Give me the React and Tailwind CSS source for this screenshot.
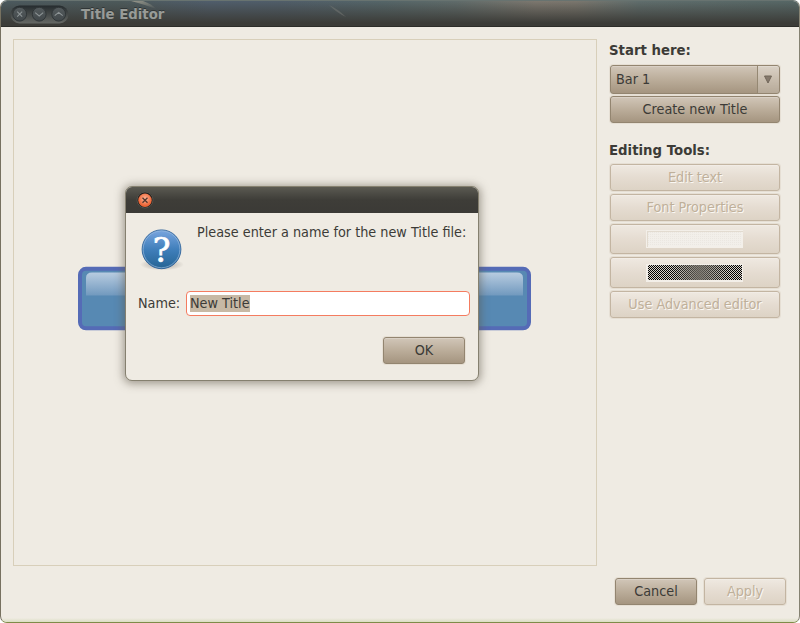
import React from "react";

const sans = "font-['DejaVu_Sans_Condensed','DejaVu_Sans',sans-serif] [font-stretch:semi-condensed]";

function Button({ children, disabled, className = "" }) {
  const look = disabled
    ? "border-[#c3b5a2] bg-gradient-to-b from-[#efe9e1] via-[#e5dcd1] to-[#ddd3c5] text-[#bfb09a] [text-shadow:1px_1px_0_#fbf8f4]"
    : "border-[#938570] bg-gradient-to-b from-[#d1c6b8] via-[#bbad9a] to-[#a59580] text-[#3c3b37]";
  return (
    <button
      className={`flex shrink-0 items-center justify-center rounded-[3px] border pb-px text-[14.28px] leading-[14px] whitespace-nowrap shadow-[0_0_0_1px_#e6dfd4,inset_0_1px_0_#ffffff33] ${look} ${className}`}
    >
      {children}
    </button>
  );
}

function TitleBar() {
  return (
    <header className="relative flex h-[26px] shrink-0 items-center border-b border-[#2d2d29] bg-[linear-gradient(to_bottom,transparent_0%,#3c3c38_88%),linear-gradient(to_right,#4c5a5f_0%,#4d5a5b_15%,#505e6c_26%,#505e6a_35%,#556669_48%,#606c6b_57%,#7d786f_67%,#7b776e_72%,#606e6d_80%,#566766_100%)] pt-px pl-[9px]">
      <svg className="absolute top-0 left-0" width="400" height="25" viewBox="0 0 400 25">
        <defs>
          <linearGradient id="streak" x1="0" y1="0" x2="1" y2="1">
            <stop stopColor="#a9a595" stopOpacity=".8" />
            <stop offset="1" stopColor="#a9a595" stopOpacity="0" />
          </linearGradient>
        </defs>
        <path d="M130 0h12q9 3 13 8-10-4-25-8Z" fill="url(#streak)" />
        <path d="M328 4q9 4 17 12-9-4-17-12Z" fill="#777a75" opacity=".5" />
      </svg>
      <svg className="relative" width="60" height="19" viewBox="0 0 60 19">
        <defs>
          <linearGradient id="pill" x1="0" y1="0" x2="0" y2="1">
            <stop stopColor="#252b2e" />
            <stop offset="1" stopColor="#666965" />
          </linearGradient>
          <linearGradient id="control" x1="0" y1="0" x2="0" y2="1">
            <stop stopColor="#555c5e" />
            <stop offset="1" stopColor="#41474a" />
          </linearGradient>
        </defs>
        <rect x="0.5" y="0.5" width="58" height="18" rx="9" fill="url(#pill)" />
        {[9.7, 29.2, 48.7].map((x) => (
          <circle key={x} cx={x} cy="9.2" r="6.9" fill="url(#control)" stroke="#303638" />
        ))}
        <g fill="none" stroke="#8d9495" strokeWidth="1.1">
          <path d="M7.2 6.7 12.2 11.7M12.2 6.7 7.2 11.7" />
          <path d="m25.2 7.7 4 3.3 4-3.3M44.7 10.7l4-3.3 4 3.3" />
        </g>
      </svg>
      <h1 className="relative ml-[11px] pt-[2px] font-['DejaVu_Sans',sans-serif] text-[13.3px] leading-none font-bold text-[#989b97] [font-stretch:normal] [text-shadow:0_-1px_0_#303637]">
        Title Editor
      </h1>
    </header>
  );
}

function BarPreview() {
  return (
    <svg className="absolute top-[226px] left-[64px]" width="454" height="65" viewBox="0 0 454 65">
      <defs>
        <linearGradient id="gloss" x1="0" y1="0" x2="0" y2="1">
          <stop stopColor="#b8cce0" />
          <stop offset="1" stopColor="#7199be" />
        </linearGradient>
      </defs>
      <rect x="2" y="2.8" width="449" height="59.5" rx="6" fill="#5789b3" stroke="#556bb6" strokeWidth="4" />
      <path d="M8 29.5V12Q8 6.5 14 6.5H439Q445 6.5 445 12V29.5Z" fill="url(#gloss)" />
    </svg>
  );
}

function NameDialog() {
  return (
    <section className="absolute top-[185px] left-[124px] flex h-[195px] w-[354px] flex-col overflow-hidden rounded-[7px] border border-[#85806f] bg-[#efebe3] shadow-[0_1px_9px_2px_#5f594b88]">
      <div className="flex h-[26px] shrink-0 items-center bg-gradient-to-b from-[#5b5a52] via-[#3e3d38] to-[#3b3a36] pl-[10px]">
        <svg width="18" height="18" viewBox="0 0 18 18">
          <defs>
            <radialGradient id="close" cx="50%" cy="40%">
              <stop stopColor="#ffb79a" />
              <stop offset="1" stopColor="#ed6637" />
            </radialGradient>
          </defs>
          <circle cx="9" cy="9" r="8" fill="#20201e" stroke="#5c5b54" strokeWidth=".8" />
          <circle cx="9" cy="9.2" r="6.7" fill="url(#close)" />
          <path d="m6.5 6.8 5 5m0-5-5 5" stroke="#53382e" strokeWidth="1.3" />
        </svg>
      </div>
      <div className="flex h-[78px] pt-[12px] pl-[12px]">
        <svg className="mt-[1px] shrink-0" width="48" height="48" viewBox="0 0 48 48">
          <defs>
            <linearGradient id="orb" x1="0" y1="0" x2="0" y2="1">
              <stop stopColor="#7aa6df" />
              <stop offset=".5" stopColor="#407fbb" />
              <stop offset="1" stopColor="#256494" />
            </linearGradient>
            <radialGradient id="shade">
              <stop stopColor="#77716a" stopOpacity=".65" />
              <stop offset="1" stopColor="#77716a" stopOpacity="0" />
            </radialGradient>
          </defs>
          <ellipse cx="24" cy="38.5" rx="22" ry="6" fill="url(#shade)" />
          <circle cx="23.5" cy="23.3" r="19.4" fill="url(#orb)" stroke="#2d6199" strokeWidth=".9" />
          <circle cx="23.5" cy="23.3" r="18.4" fill="none" stroke="#9bbdde" strokeOpacity=".65" />
          <text x="23.5" y="36" textAnchor="middle" fill="white" stroke="white" strokeWidth=".7" className="font-['DejaVu_Serif',serif] text-[33px] [font-stretch:normal]">?</text>
        </svg>
        <p className="ml-[11px] text-[14.28px] leading-[14px] whitespace-nowrap">Please enter a name for the new Title file:</p>
      </div>
      <label className="-mt-px flex h-[26px] items-center pr-[8px] pl-[12px] text-[14.28px] leading-none">
        <span className="w-[48px] shrink-0">Name:</span>
        <span className="flex h-[25px] flex-1 items-center rounded-[4px] border border-[#f47c60] bg-white pl-[3px]">
          <span className="bg-[#c7b9a5] leading-[17px]">New Title</span>
        </span>
      </label>
      <div className="flex justify-end pt-[21px] pr-[13px]">
        <Button className="h-[27px] w-[82px]">OK</Button>
      </div>
    </section>
  );
}

function Swatch({ dark }) {
  return (
    <svg className="mt-px" width="98" height="18" viewBox="0 0 98 18" shapeRendering="crispEdges">
      <defs>
        <pattern id="dither" width="2" height="2" patternUnits="userSpaceOnUse">
          <rect width="2" height="2" fill="#d8d3ca" />
          <path d="M0 0h1v1H0zM1 1h1v1H1z" fill="#000" />
        </pattern>
        <pattern id="pale" width="2" height="2" patternUnits="userSpaceOnUse">
          <rect width="2" height="2" fill="#f2efea" />
          <path d="M0 0h1v1H0z" fill="#ebe7e1" />
        </pattern>
        <linearGradient id="blend">
          <stop offset=".25" stopColor="#716d65" stopOpacity="0" />
          <stop offset=".55" stopColor="#716d65" stopOpacity=".85" />
          <stop offset=".85" stopColor="#716d65" stopOpacity="0" />
        </linearGradient>
      </defs>
      <rect width="97" height="18" fill="#f3efe9" />
      <rect x="2" y="1" width="94" height="15" fill={dark ? "url(#dither)" : "url(#pale)"} />
      {dark && <rect x="2" y="1" width="94" height="15" fill="url(#blend)" />}
      {!dark && <path d="M1.5 17V1.5H97" fill="none" stroke="#e2dbd0" />}
    </svg>
  );
}

function Sidebar() {
  const heading = "-ml-px font-['DejaVu_Sans',sans-serif] text-[13.3px] leading-[16px] font-bold [font-stretch:normal]";
  return (
    <aside className="flex w-[170px] shrink-0 flex-col">
      <h2 className={`mt-[4px] h-[22px] ${heading}`}>Start here:</h2>
      <Button className="h-[29px] w-full overflow-hidden !pb-0">
        <span className="flex-1 pb-px pl-[5px] text-left">Bar 1</span>
        <span className="flex h-full w-[22px] items-center justify-center border-l border-[#958873] bg-[#ffffff33]">
          <svg className="mr-px" width="10" height="9" viewBox="0 0 10 9"><path d="M1.5 1h7L5 8Z" fill="#85796c" stroke="#706659" /></svg>
        </span>
      </Button>
      <Button className="mt-[2px] h-[27px] w-full">Create new Title</Button>
      <h2 className={`mt-[20px] h-[21px] ${heading}`}>Editing Tools:</h2>
      <Button disabled className="h-[27px] w-full">Edit text</Button>
      <Button disabled className="mt-[3px] h-[27px] w-full">Font Properties</Button>
      <Button disabled className="mt-[3px] h-[30px] w-full"><Swatch /></Button>
      <Button disabled className="mt-[3px] h-[31px] w-full"><Swatch dark /></Button>
      <Button disabled className="mt-[3px] h-[27px] w-full">Use Advanced editor</Button>
    </aside>
  );
}

export default function App() {
  return (
    <div className="h-[623px] w-[800px] bg-white">
      <main className={`relative flex h-full w-full flex-col overflow-hidden rounded-[7px] border border-t-[#687370] border-r-[#858272] border-b-[#7e8b48] border-l-[#777160] bg-[#efebe3] text-[#3c3b37] ${sans}`}>
        <TitleBar />
        <div className="flex h-[539px] shrink-0 gap-[13px] pt-[11px] pl-[12px]">
          <div className="relative mt-px h-[527px] w-[584px] shrink-0 border border-[#d8cfba]">
            <BarPreview />
          </div>
          <div className="pt-px">
            <Sidebar />
          </div>
        </div>
        <footer className="flex justify-end gap-[7px] pt-[12px] pr-[13px]">
          <Button className="h-[27px] w-[82px]">Cancel</Button>
          <Button disabled className="h-[27px] w-[82px]">Apply</Button>
        </footer>
        <div className="mt-auto h-[4px] bg-gradient-to-b from-[#efebe3] to-[#dbdec2]" />
        <NameDialog />
      </main>
    </div>
  );
}
